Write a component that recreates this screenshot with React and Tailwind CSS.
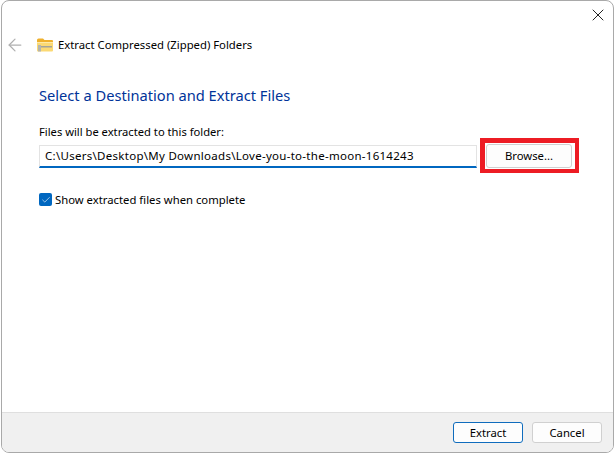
import { ArrowLeft, X, Check } from 'lucide-react'

function FolderIcon() {
  return (
    <svg width="16" height="14" viewBox="0 0 16 14" className="shrink-0">
      <path d="M0 2 Q0 0.5 1.5 0.5 H6 L7.5 2 H15 Q16 2 16 3 V5 H0 Z" fill="#efb02c" />
      <path d="M0 4 H16 V12.5 Q16 13.5 15 13.5 H1 Q0 13.5 0 12.5 Z" fill="#fbd974" />
      <path d="M0 4 H16 V5 H0 Z" fill="#fdeaa8" />
      <path d="M4 8 H15 V9.5 H4 Z" fill="#a3a39a" />
      <path d="M1 7 H4 V13.5 H1 Z" fill="#b5b5ad" />
    </svg>
  )
}

function PushButton({ primary, children }) {
  return (
    <button
      className={
        primary
          ? 'h-[21px] w-[70px] rounded-[3px] border border-[#0f6cbd] bg-[#fdfdfd] pt-[1px] text-[11.3px] text-black'
          : 'h-[21px] w-[70px] rounded-[3px] border border-[#d0d0d0] bg-[#fdfdfd] pt-[1px] text-[11.3px] text-black'
      }
    >
      {children}
    </button>
  )
}

export default function App() {
  return (
    <div className="h-[454px] w-[614px] overflow-hidden bg-white pl-[1px] font-['Noto_Sans',sans-serif]">
      <div className="flex h-[453px] flex-col overflow-hidden rounded-lg border border-[#a9a9a9] bg-white">
        <div className="flex h-[34px] justify-end">
          <X size={20} strokeWidth={1.2} className="mt-[4px] mr-[5px] text-[#222]" />
        </div>

        <div className="flex h-[20px] items-center pl-[3px]">
          <ArrowLeft size={20} strokeWidth={1.5} className="text-[#b0b0b0]" />
          <div className="ml-[12px] flex items-center gap-[5px]">
            <FolderIcon />
            <span className="text-[11.3px] text-black">Extract Compressed (Zipped) Folders</span>
          </div>
        </div>

        <div className="flex flex-1 flex-col pl-[37px]">
          <h1 className="mt-[30px] text-[14.65px] leading-5 font-normal text-[#003399]">
            Select a Destination and Extract Files
          </h1>

          <p className="mt-[21px] text-[11.2px] leading-3 text-black">Files will be extracted to this folder:</p>

          <div className="flex items-start">
            <div className="mt-[7px] flex h-[23px] w-[438px] items-center border border-b-2 border-[#e3e3e3] border-b-[#0067c0] pl-[5px] text-[11.5px] tracking-[0.28px] text-black">
              C:\Users\Desktop\My Downloads\Love-you-to-the-moon-1614243
            </div>
            <div className="ml-[3px] border-[#ed1c24] border-t-[5px] border-r-[4px] border-b-[4px] border-l-[5px] bg-white py-[1px] pr-[3px] pl-[1px]">
              <div className="flex h-[24px] w-[86px] items-center justify-center rounded-[3px] border border-[#d0d0d0] bg-[#fdfdfd] text-[11.3px] text-black">
                Browse...
              </div>
            </div>
          </div>

          <label className="mt-[20px] flex items-center gap-[3px]">
            <span className="flex h-[13px] w-[13px] items-center justify-center rounded-[2px] bg-[#0067c0]">
              <Check size={10} strokeWidth={1.5} className="text-white" />
            </span>
            <span className="text-[11.3px] leading-[13px] text-black">Show extracted files when complete</span>
          </label>
        </div>

        <div className="flex h-[40px] items-center justify-end gap-[9px] border-t border-[#dfdfdf] bg-[#f0f0f0] pr-[11px]">
          <PushButton primary>Extract</PushButton>
          <PushButton>Cancel</PushButton>
        </div>
      </div>
    </div>
  )
}
